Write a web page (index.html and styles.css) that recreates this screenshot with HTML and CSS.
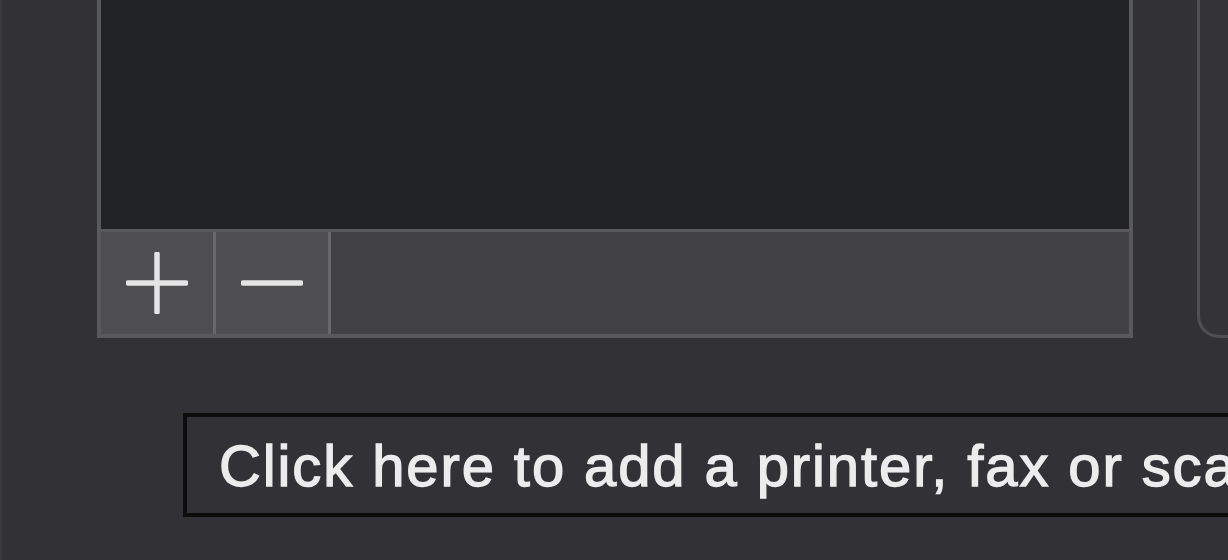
FILE: index.html
```html
<!DOCTYPE html>
<html>
<head>
<meta charset="utf-8">
<link rel="stylesheet" href="styles.css">
</head>
<body>
<div class="window">
  <div class="top-row">
    <div class="list-panel">
      <div class="list-area"></div>
      <div class="toolbar">
        <button class="tool-btn" aria-label="Add">
          <svg width="62" height="62" viewBox="0 0 62 62"><path d="M31 2V60M2 31H60" stroke="#e4e4e4" stroke-width="5.5" stroke-linecap="round" fill="none"/></svg>
        </button>
        <div class="divider"></div>
        <button class="tool-btn" aria-label="Remove">
          <svg width="62" height="62" viewBox="0 0 62 62"><path d="M2 31H60" stroke="#e4e4e4" stroke-width="5.5" stroke-linecap="round" fill="none"/></svg>
        </button>
        <div class="divider"></div>
      </div>
    </div>
    <div class="side-panel"></div>
  </div>
  <div class="tooltip">
    <span class="tooltip-text">Click here to add a printer, fax or scanner</span>
  </div>
</div>
</body>
</html>
```

FILE: styles.css
```css
html, body {
  margin: 0;
  padding: 0;
}
body {
  width: 1228px;
  height: 560px;
  overflow: hidden;
  background: #323236;
  font-family: "Liberation Sans", Arial, sans-serif;
}
.window {
  width: 1226px;
  height: 560px;
  border-left: 2px solid #3b3b3f;
  background: #323236;
  display: flex;
  flex-direction: column;
}
.top-row {
  display: flex;
  height: 338px;
  flex-shrink: 0;
}
.list-panel {
  margin-left: 95px;
  width: 1028px;
  flex-shrink: 0;
  border: 4px solid #59595b;
  border-top: none;
  display: flex;
  flex-direction: column;
}
.list-area {
  height: 229px;
  background: #222327;
}
.toolbar {
  height: 102px;
  border-top: 3px solid #59595b;
  background: #424245;
  display: flex;
}
.tool-btn {
  width: 112px;
  height: 102px;
  padding: 0;
  margin: 0;
  border: none;
  background: #4e4e51;
  display: flex;
  align-items: center;
  justify-content: center;
}
.tool-btn svg {
  display: block;
}
.divider {
  width: 3px;
  background: #68686a;
}
.side-panel {
  margin-left: 64px;
  flex: 1;
  border-left: 3px solid #505053;
  border-bottom: 3px solid #505053;
  border-bottom-left-radius: 22px;
  background: #343438;
}
.tooltip {
  margin-top: 75px;
  margin-left: 181px;
  width: 1100px;
  height: 96px;
  border: 4px solid #0d0d0e;
  background: #323236;
  display: flex;
  align-items: center;
  padding-left: 32px;
  overflow: hidden;
  flex-shrink: 0;
}
.tooltip-text {
  white-space: nowrap;
  font-size: 58px;
  letter-spacing: 1.9px;
  color: #ececec;
  -webkit-text-stroke: 1.3px #ececec;
}
```
